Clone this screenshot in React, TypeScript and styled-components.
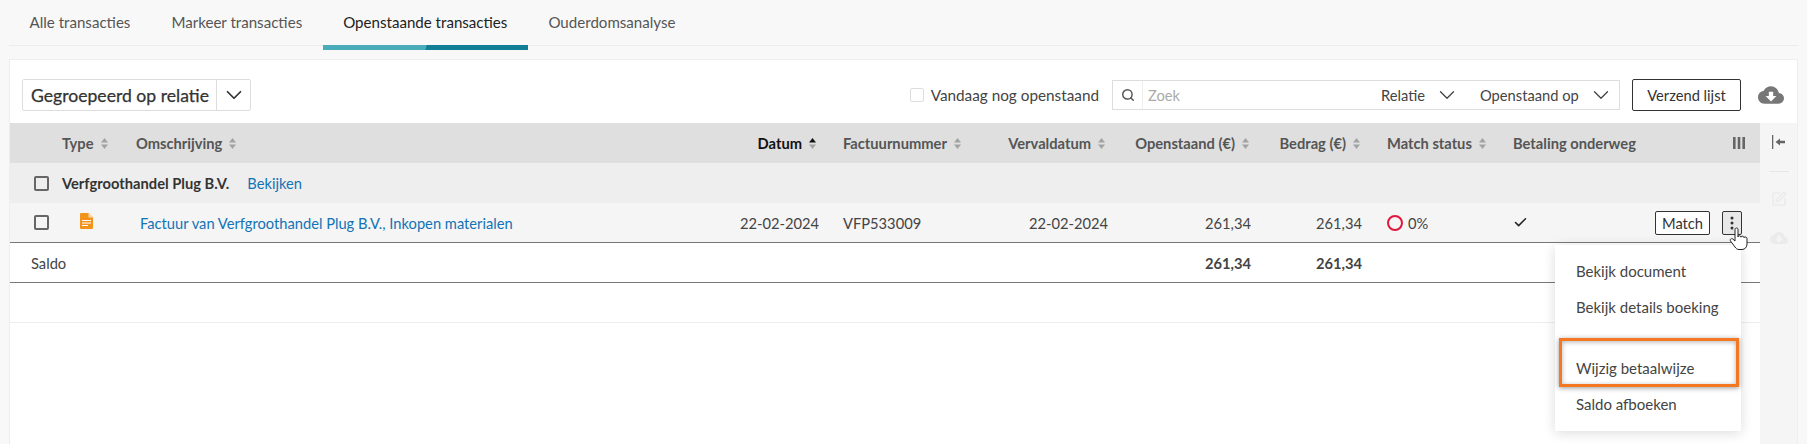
import styled, {createGlobalStyle} from "styled-components";
import {ChevronDown, Search, Check} from "lucide-react";
import {MdCloudDownload} from "react-icons/md";
import {LuSquarePen} from "react-icons/lu";

const GlobalStyle = createGlobalStyle`
  html, body {
    margin: 0;
    height: 100%;
    overflow: hidden;
    background: #f8f8f8;
    color: #444;
    font-family: "Lato", "Noto Sans", sans-serif;
    font-size: 14.7px;
  }
`

const Page = styled.div`
  height: 444px;
  display: flex;
  flex-direction: column;
  padding: 0 9px 0 9px;
`

const TabBar = styled.div`
  display: flex;
  height: 46px;
  box-sizing: border-box;
  flex: none;
  border-bottom: 1px solid #ececec;
  margin-bottom: 13px;
`

const Tab = styled.div<{ $active?: boolean }>`
  position: relative;
  padding: 0 20.5px;
  line-height: 45px;
  font-size: 15.1px;
  color: ${p => p.$active ? "#222" : "#555"};
  white-space: nowrap;
  &::after {
    content: ${p => p.$active ? '""' : "none"};
    position: absolute;
    left: 0;
    right: 0;
    top: 45px;
    height: 5px;
    background: linear-gradient(105deg, #49adb9 50%, #127e95 50.5%);
  }
`

const Panel = styled.div`
  flex: 1;
  display: flex;
  flex-direction: column;
  background: #fff;
  border: 1px solid #eee;
  border-bottom: none;
  min-height: 0;
`

const Toolbar = styled.div`
  height: 63px;
  box-sizing: border-box;
  flex: none;
  display: flex;
  align-items: center;
  padding: 7px 13px 0 12px;
`

const GroupSelect = styled.div`
  display: flex;
  height: 32px;
  width: 229px;
  box-sizing: border-box;
  border: 1px solid #ddd;
  border-radius: 2px;
  align-items: center;
  font-size: 17.6px;
  -webkit-text-stroke: .25px #333;
  color: #333;
  margin-right: auto;
`

const GroupLabel = styled.div`
  flex: 1;
  padding-left: 8px;
  white-space: nowrap;
`

const GroupCaret = styled.div`
  width: 33px;
  height: 100%;
  border-left: 1px solid #ddd;
  display: flex;
  align-items: center;
  justify-content: center;
  color: #333;
`

const TodayToggle = styled.label`
  display: flex;
  align-items: center;
  gap: 7px;
  margin-right: 13px;
  font-size: 15.3px;
  white-space: nowrap;
`

const SoftBox = styled.span`
  width: 12px;
  height: 12px;
  border: 1px solid #ddd;
  border-radius: 2px;
  background: #fff;
`

const SearchBox = styled.div`
  width: 508px;
  height: 30px;
  box-sizing: border-box;
  border: 1px solid #ddd;
  display: flex;
  align-items: center;
  margin-right: 12px;
`

const SearchIcon = styled.div`
  width: 29px;
  height: 100%;
  display: flex;
  align-items: center;
  justify-content: center;
  border-right: 1px solid #eee;
  color: #555;
`

const SearchPlaceholder = styled.div`
  flex: 1;
  padding-left: 5px;
  color: #aaa;
`

const SearchFilter = styled.div<{ $width: number }>`
  width: ${p => p.$width}px;
  display: flex;
  align-items: center;
  gap: 9px;
  white-space: nowrap;
`

const SendButton = styled.button`
  width: 109px;
  height: 32px;
  background: #fff;
  border: 1px solid #333;
  border-radius: 2px;
  font: inherit;
  color: #333;
  padding: 0;
  margin-right: 17px;
`

const CloudAction = styled.div`
  display: flex;
  color: #777;
`

const Body = styled.div`
  flex: 1;
  display: flex;
  min-height: 0;
`

const Main = styled.div`
  flex: 1;
  display: flex;
  flex-direction: column;
  min-width: 0;
`

const SideRail = styled.div`
  width: 37px;
  flex: none;
  background: #f5f5f5;
  display: flex;
  flex-direction: column;
  align-items: center;
  padding-top: 12px;
  box-sizing: border-box;
  color: #666;
`

const RailRule = styled.div`
  width: 20px;
  height: 1px;
  background: #e6e6e6;
  margin: 22px 0 19px;
`

const RailFaded = styled.div`
  color: #ebebeb;
  display: flex;
  margin-bottom: 22px;
`

const columns = "52px 74px 599px 108px 142px 147px 144px 111px 126px 1fr"

const Row = styled.div<{ $bg: string; $line?: boolean; $height: number }>`
  display: grid;
  grid-template-columns: ${columns};
  height: ${p => p.$height}px;
  flex: none;
  box-sizing: border-box;
  align-items: center;
  background: ${p => p.$bg};
  border-bottom: ${p => p.$line ? "1.5px solid #777" : "none"};
  white-space: nowrap;
`

const HeadCell = styled.div<{ $right?: boolean; $active?: boolean; $pad?: number }>`
  display: flex;
  align-items: center;
  gap: 6px;
  font-weight: 700;
  color: ${p => p.$active ? "#111" : "#555"};
  justify-content: ${p => p.$right ? "flex-end" : "flex-start"};
  padding-right: ${p => p.$pad ?? 0}px;
`

const Cell = styled.div<{ $right?: boolean; $pad?: number; $bold?: boolean }>`
  text-align: ${p => p.$right ? "right" : "left"};
  padding-right: ${p => p.$pad ?? 0}px;
  font-weight: ${p => p.$bold ? 700 : 400};
`

const SaldoCell = styled(Cell)`
  grid-column: 1 / 7;
  padding-left: 21px;
`

const BoxCell = styled.div`
  padding-left: 24px;
  display: flex;
`

const RowBox = styled.span`
  width: 11px;
  height: 11px;
  border: 2px solid #666;
  border-radius: 2px;
`

const GroupCell = styled.div`
  grid-column: 2 / 4;
  display: flex;
  gap: 18px;
  font-weight: 700;
  color: #333;
`

const Link = styled.a<{ $indent?: number }>`
  color: #1273b5;
  font-weight: 400;
  padding-left: ${p => p.$indent ?? 0}px;
`

const TypeCell = styled.div`
  padding: 0 0 3px 18px;
  display: flex;
`

const StatusCell = styled.div`
  display: flex;
  align-items: center;
  gap: 5px;
`

const StatusRing = styled.span`
  width: 12px;
  height: 12px;
  border: 2px solid #e0173c;
  border-radius: 50%;
`

const ActionCell = styled.div<{ $pad: number }>`
  display: flex;
  justify-content: space-between;
  align-items: center;
  padding-right: ${p => p.$pad}px;
`

const ActionGroup = styled.div`
  display: flex;
  gap: 12px;
`

const MatchButton = styled.button`
  width: 55px;
  height: 24px;
  padding: 0;
  background: #fff;
  border: 1px solid #333;
  border-radius: 2px;
  font: inherit;
  color: #333;
`

const KebabWrap = styled.div`
  position: relative;
  width: 20px;
  height: 24px;
`

const KebabButton = styled.div`
  width: 20px;
  height: 24px;
  box-sizing: border-box;
  border: 1px solid #333;
  border-radius: 2px;
  background: #e8e8e8;
  display: flex;
  align-items: center;
  justify-content: center;
`

const HandCursor = styled.svg`
  position: absolute;
  left: 7px;
  top: 16px;
  z-index: 3;
`

const Menu = styled.div`
  position: absolute;
  top: 34px;
  right: 1px;
  z-index: 2;
  width: 186px;
  box-sizing: border-box;
  padding: 8px 0 9px;
  background: #fff;
  box-shadow: 0 2px 12px rgba(0, 0, 0, .14);
`

const MenuItem = styled.div<{ $marked?: boolean; $gap?: boolean }>`
  position: relative;
  height: 36px;
  line-height: 36px;
  padding-left: 21px;
  margin-top: ${p => p.$gap ? 25 : 0}px;
  font-size: 15px;
  color: #444;
  &::after {
    content: ${p => p.$marked ? '""' : "none"};
    position: absolute;
    left: 4px;
    right: 2px;
    top: -12px;
    bottom: -1px;
    border: 3px solid #f47721;
    box-shadow: 0 1px 5px rgba(0, 0, 0, .4), inset 0 1px 5px rgba(0, 0, 0, .3);
  }
`

const EmptyRow = styled.div`
  height: 39px;
  flex: none;
  border-bottom: 1px solid #eee;
`

const SortIcon = ({active}: { active?: boolean }) => (
    <svg width="9" height="13" viewBox="0 0 9 13">
        <path d="M4.5 1 8 5.4H1z" fill={active ? "#111" : "#a3a3a3"}/>
        <path d="M4.5 12 8 7.6H1z" fill="#a3a3a3"/>
    </svg>
)

const InvoiceIcon = () => (
    <svg width="13" height="16" viewBox="0 0 13 16">
        <path d="M0 1a1 1 0 0 1 1-1h7.5L13 4.5V15a1 1 0 0 1-1 1H1a1 1 0 0 1-1-1z" fill="#f2931e"/>
        <path d="M8.5 0 13 4.5H8.5z" fill="#fbd9a8"/>
        <path d="M2 7.5h9M2 10h9M2 12.5h6" stroke="#fff" strokeWidth="1"/>
    </svg>
)

const headers: { label: string, right?: boolean, active?: boolean, pad?: number }[] = [
    {label: "Type"},
    {label: "Omschrijving"},
    {label: "Datum", right: true, active: true, pad: 26},
    {label: "Factuurnummer"},
    {label: "Vervaldatum", right: true, pad: 26},
    {label: "Openstaand (€)", right: true, pad: 26},
    {label: "Bedrag (€)", right: true, pad: 26},
    {label: "Match status"},
]

const App = () => {
    return <Page>
        <GlobalStyle/>
        <TabBar>
            <Tab>Alle transacties</Tab>
            <Tab>Markeer transacties</Tab>
            <Tab $active>Openstaande transacties</Tab>
            <Tab>Ouderdomsanalyse</Tab>
        </TabBar>
        <Panel>
            <Toolbar>
                <GroupSelect>
                    <GroupLabel>Gegroepeerd op relatie</GroupLabel>
                    <GroupCaret><ChevronDown size={26} strokeWidth={1.6}/></GroupCaret>
                </GroupSelect>
                <TodayToggle><SoftBox/>Vandaag nog openstaand</TodayToggle>
                <SearchBox>
                    <SearchIcon><Search size={14} strokeWidth={2.5}/></SearchIcon>
                    <SearchPlaceholder>Zoek</SearchPlaceholder>
                    <SearchFilter $width={99}>Relatie <ChevronDown size={26} strokeWidth={1.2}/></SearchFilter>
                    <SearchFilter $width={139}>Openstaand op <ChevronDown size={26} strokeWidth={1.2}/></SearchFilter>
                </SearchBox>
                <SendButton>Verzend lijst</SendButton>
                <CloudAction><MdCloudDownload size={26}/></CloudAction>
            </Toolbar>
            <Body>
                <Main>
                    <Row $bg="#dfdfdf" $height={40}>
                        <span/>
                        {headers.map(h =>
                            <HeadCell key={h.label} $right={h.right} $active={h.active} $pad={h.pad}>
                                {h.label}<SortIcon active={h.active}/>
                            </HeadCell>)}
                        <ActionCell $pad={15}>
                            <HeadCell>Betaling onderweg</HeadCell>
                            <svg width="12" height="12" viewBox="0 0 12 12" fill="#666">
                                <path d="M0 0h2.600v12H0zM4.700 0h2.600v12H4.700zM9.400 0H12v12H9.400z"/>
                            </svg>
                        </ActionCell>
                    </Row>
                    <Row $bg="#eeeeee" $height={40}>
                        <BoxCell><RowBox/></BoxCell>
                        <GroupCell>Verfgroothandel Plug B.V. <Link>Bekijken</Link></GroupCell>
                    </Row>
                    <Row $bg="#f5f5f5" $height={40} $line>
                        <BoxCell><RowBox/></BoxCell>
                        <TypeCell><InvoiceIcon/></TypeCell>
                        <Cell><Link $indent={4}>Factuur van Verfgroothandel Plug B.V., Inkopen materialen</Link></Cell>
                        <Cell $right $pad={24}>22-02-2024</Cell>
                        <Cell>VFP533009</Cell>
                        <Cell $right $pad={24}>22-02-2024</Cell>
                        <Cell $right $pad={25}>261,34</Cell>
                        <Cell $right $pad={25}>261,34</Cell>
                        <StatusCell><StatusRing/>0%</StatusCell>
                        <ActionCell $pad={18}>
                            <Check size={15} color="#222" strokeWidth={2.5}/>
                            <ActionGroup>
                                <MatchButton>Match</MatchButton>
                                <KebabWrap>
                                    <KebabButton>
                                        <svg width="4" height="14" viewBox="0 0 4 14" fill="#333">
                                            <circle cx="2" cy="2" r="1.5"/>
                                            <circle cx="2" cy="7" r="1.5"/>
                                            <circle cx="2" cy="12" r="1.5"/>
                                        </svg>
                                    </KebabButton>
                                    <HandCursor width="20" height="24" viewBox="0 0 20 24">
                                        <path
                                            d="M6 2.500c0-2 3-2 3 0V10c0-1.600 3-1.600 3 .2 0-1.500 3-1.500 3 .5 0-1.200 3-1 3 .8v5.500c0 3-2 5.500-5 5.500H10c-2 0-3-1-4-2.500L1.500 14c-1-1.800 1.200-3.200 2.500-1.800L6 14z"
                                            fill="#fff" stroke="#222" strokeWidth="1"/>
                                    </HandCursor>
                                    <Menu>
                                        <MenuItem>Bekijk document</MenuItem>
                                        <MenuItem>Bekijk details boeking</MenuItem>
                                        <MenuItem $gap $marked>Wijzig betaalwijze</MenuItem>
                                        <MenuItem>Saldo afboeken</MenuItem>
                                    </Menu>
                                </KebabWrap>
                            </ActionGroup>
                        </ActionCell>
                    </Row>
                    <Row $bg="#fff" $height={40} $line>
                        <SaldoCell>Saldo</SaldoCell>
                        <Cell $right $pad={25} $bold>261,34</Cell>
                        <Cell $right $pad={25} $bold>261,34</Cell>
                    </Row>
                    <EmptyRow/>
                </Main>
                <SideRail>
                    <svg width="14" height="14" viewBox="0 0 14 14" fill="#666">
                        <path d="M0 0h1.300v14H0zM3.500 7 8 3.500V5.700h5v2.600H8v2.200z"/>
                    </svg>
                    <RailRule/>
                    <RailFaded><LuSquarePen size={16} strokeWidth={2.5}/></RailFaded>
                    <RailFaded><MdCloudDownload size={18}/></RailFaded>
                </SideRail>
            </Body>
        </Panel>
    </Page>
}

export default App
